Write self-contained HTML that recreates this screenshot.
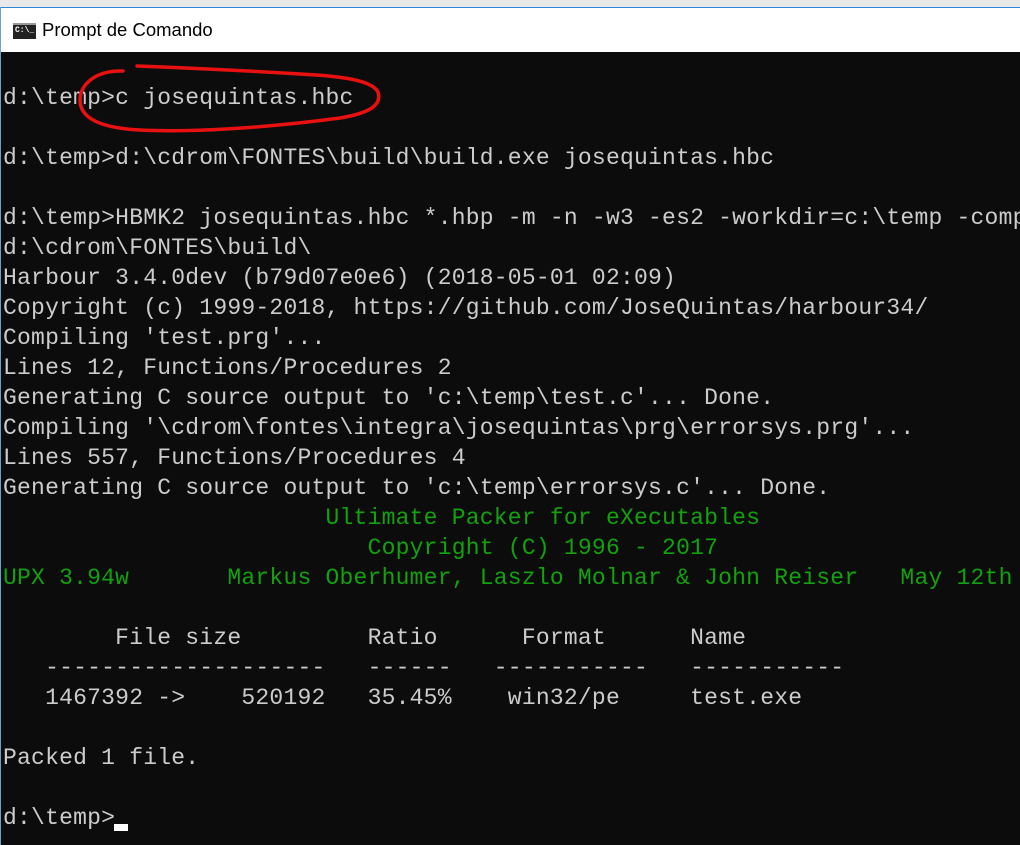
<!DOCTYPE html>
<html><head><meta charset="utf-8"><style>
html,body{margin:0;padding:0;width:1020px;height:845px;overflow:hidden;background:#0c0c0c;}
#top{position:absolute;left:0;top:0;width:1020px;height:7px;background:#e9e9e9;}
#title{position:absolute;left:0;top:7px;width:1020px;height:45px;background:#fff;border-top:1px solid #2b88d8;box-sizing:border-box;}
#title span{position:absolute;left:42px;top:11px;font:18.5px "Liberation Sans",sans-serif;color:#000;}
#ico{position:absolute;left:13px;top:15px;width:23px;height:16px;background:#222;border-top:2px solid #999;box-sizing:border-box;color:#fff;font:bold 8px "Liberation Mono",monospace;line-height:12px;padding-left:2px;}
#lb{position:absolute;left:0;top:7px;width:1px;height:838px;background:#6d9fd0;}
pre{position:absolute;left:3px;top:83px;margin:0;font:23px/30px "Liberation Mono",monospace;color:#cccccc;white-space:pre;letter-spacing:0.22px;}
.g{color:#13a10e;}
#cur{position:absolute;left:114px;top:824px;width:14px;height:7px;background:#fff;}
svg{position:absolute;left:0;top:0;}
</style></head><body>
<div id="top"></div>
<div id="title"><div id="ico">C:\_</div><span>Prompt de Comando</span></div>
<div id="lb"></div>
<pre>d:\temp&gt;c josequintas.hbc

d:\temp&gt;d:\cdrom\FONTES\build\build.exe josequintas.hbc

d:\temp&gt;HBMK2 josequintas.hbc *.hbp -m -n -w3 -es2 -workdir=c:\temp -comp
d:\cdrom\FONTES\build\
Harbour 3.4.0dev (b79d07e0e6) (2018-05-01 02:09)
Copyright (c) 1999-2018, https://github.com/JoseQuintas/harbour34/
Compiling 'test.prg'...
Lines 12, Functions/Procedures 2
Generating C source output to 'c:\temp\test.c'... Done.
Compiling '\cdrom\fontes\integra\josequintas\prg\errorsys.prg'...
Lines 557, Functions/Procedures 4
Generating C source output to 'c:\temp\errorsys.c'... Done.
<span class="g">                       Ultimate Packer for eXecutables
                          Copyright (C) 1996 - 2017
UPX 3.94w       Markus Oberhumer, Laszlo Molnar &amp; John Reiser   May 12th</span>

        File size         Ratio      Format      Name
   --------------------   ------   -----------   -----------
   1467392 -&gt;    520192   35.45%    win32/pe     test.exe

Packed 1 file.

d:\temp&gt;</pre>
<div id="cur"></div>
<svg width="1020" height="845"><path d="M123 71 C95 70 80 85 80 100 C80 118 100 128 140 130 C200 133 280 126 340 118 C370 113 382 105 378 92 C372 80 340 76 300 74 C250 71 190 68 137 66" fill="none" stroke="#e81010" stroke-width="3.5" stroke-linecap="round"/></svg>
</body></html>
